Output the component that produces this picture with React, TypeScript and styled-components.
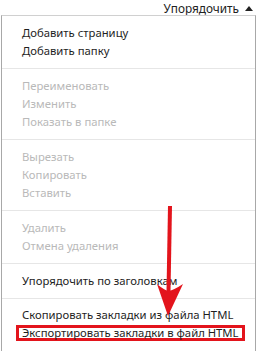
import React from "react";
import styled, { createGlobalStyle } from "styled-components";

const Global = createGlobalStyle`
  html, body { margin: 0; padding: 0; background: #fff; overflow: hidden; }
  body { font-family: "Noto Sans", "Open Sans", sans-serif; }
  #root { width: 258px; height: 351px; overflow: hidden; }
`;

const Page = styled.div`
  position: relative;
  width: 258px;
  height: 351px;
  display: flex;
  flex-direction: column;
  background: #fff;
  overflow: hidden;
`;

const Header = styled.div`
  box-sizing: border-box;
  height: 15px;
  padding: 2px 5px 0 0;
  display: flex;
  align-items: center;
  justify-content: flex-end;
  gap: 6px;
  font-size: 11.8px;
  color: #222;
  line-height: 13px;
  white-space: nowrap;
`;

const Caret = styled.span`
  display: block;
  width: 0;
  height: 0;
  border-left: 4px solid transparent;
  border-right: 4px solid transparent;
  border-bottom: 5px solid #222;
  margin-bottom: 1px;
`;

const Panel = styled.div`
  flex: 1;
  min-width: 0;
  margin: 0 2px 0 1px;
  border: 1px solid #a8a8a8;
  border-top-color: #d0d0d0;
  border-bottom: none;
  display: flex;
  flex-direction: column;
`;

const Group = styled.div<{ $last?: boolean }>`
  padding: ${(p) => (p.$last ? "7px 0 8px" : "8px 0")};
  & + & {
    border-top: 1px solid #e6e6e6;
  }
`;

const Item = styled.div<{ $disabled?: boolean }>`
  height: 18px;
  line-height: 18px;
  padding-left: 20px;
  font-size: 11.3px;
  white-space: nowrap;
  color: ${(p) => (p.$disabled ? "#b9b9b9" : "#1e1e1e")};
`;

const Highlight = styled.span`
  display: inline-block;
  margin-left: -6px;
  padding: 0 3px;
  line-height: 10px;
  border: 3px solid #e3141c;
`;

const Arrow = styled.svg`
  position: absolute;
  left: 0;
  top: 0;
  pointer-events: none;
`;

export default function App() {
  return (
    <>
      <Global />
      <Page>
        <Header>
          <span>Упорядочить</span>
          <Caret />
        </Header>
        <Panel>
          <Group>
            <Item>Добавить страницу</Item>
            <Item>Добавить папку</Item>
          </Group>
          <Group>
            <Item $disabled>Переименовать</Item>
            <Item $disabled>Изменить</Item>
            <Item $disabled>Показать в папке</Item>
          </Group>
          <Group>
            <Item $disabled>Вырезать</Item>
            <Item $disabled>Копировать</Item>
            <Item $disabled>Вставить</Item>
          </Group>
          <Group>
            <Item $disabled>Удалить</Item>
            <Item $disabled>Отмена удаления</Item>
          </Group>
          <Group>
            <Item>Упорядочить по заголовкам</Item>
          </Group>
          <Group $last>
            <Item>Скопировать закладки из файла HTML</Item>
            <Item>
              <Highlight>Экспортировать закладки в файл HTML</Highlight>
            </Item>
          </Group>
        </Panel>
        <Arrow width="258" height="351" viewBox="0 0 258 351">
          <path d="M170 206 L168.5 292" stroke="#e3141c" strokeWidth="4" strokeLinecap="butt" />
          <path d="M157 284 Q164 290 168.5 291 Q174 290 183 284 L168 316 Z" fill="#e3141c" />
        </Arrow>
      </Page>
    </>
  );
}
